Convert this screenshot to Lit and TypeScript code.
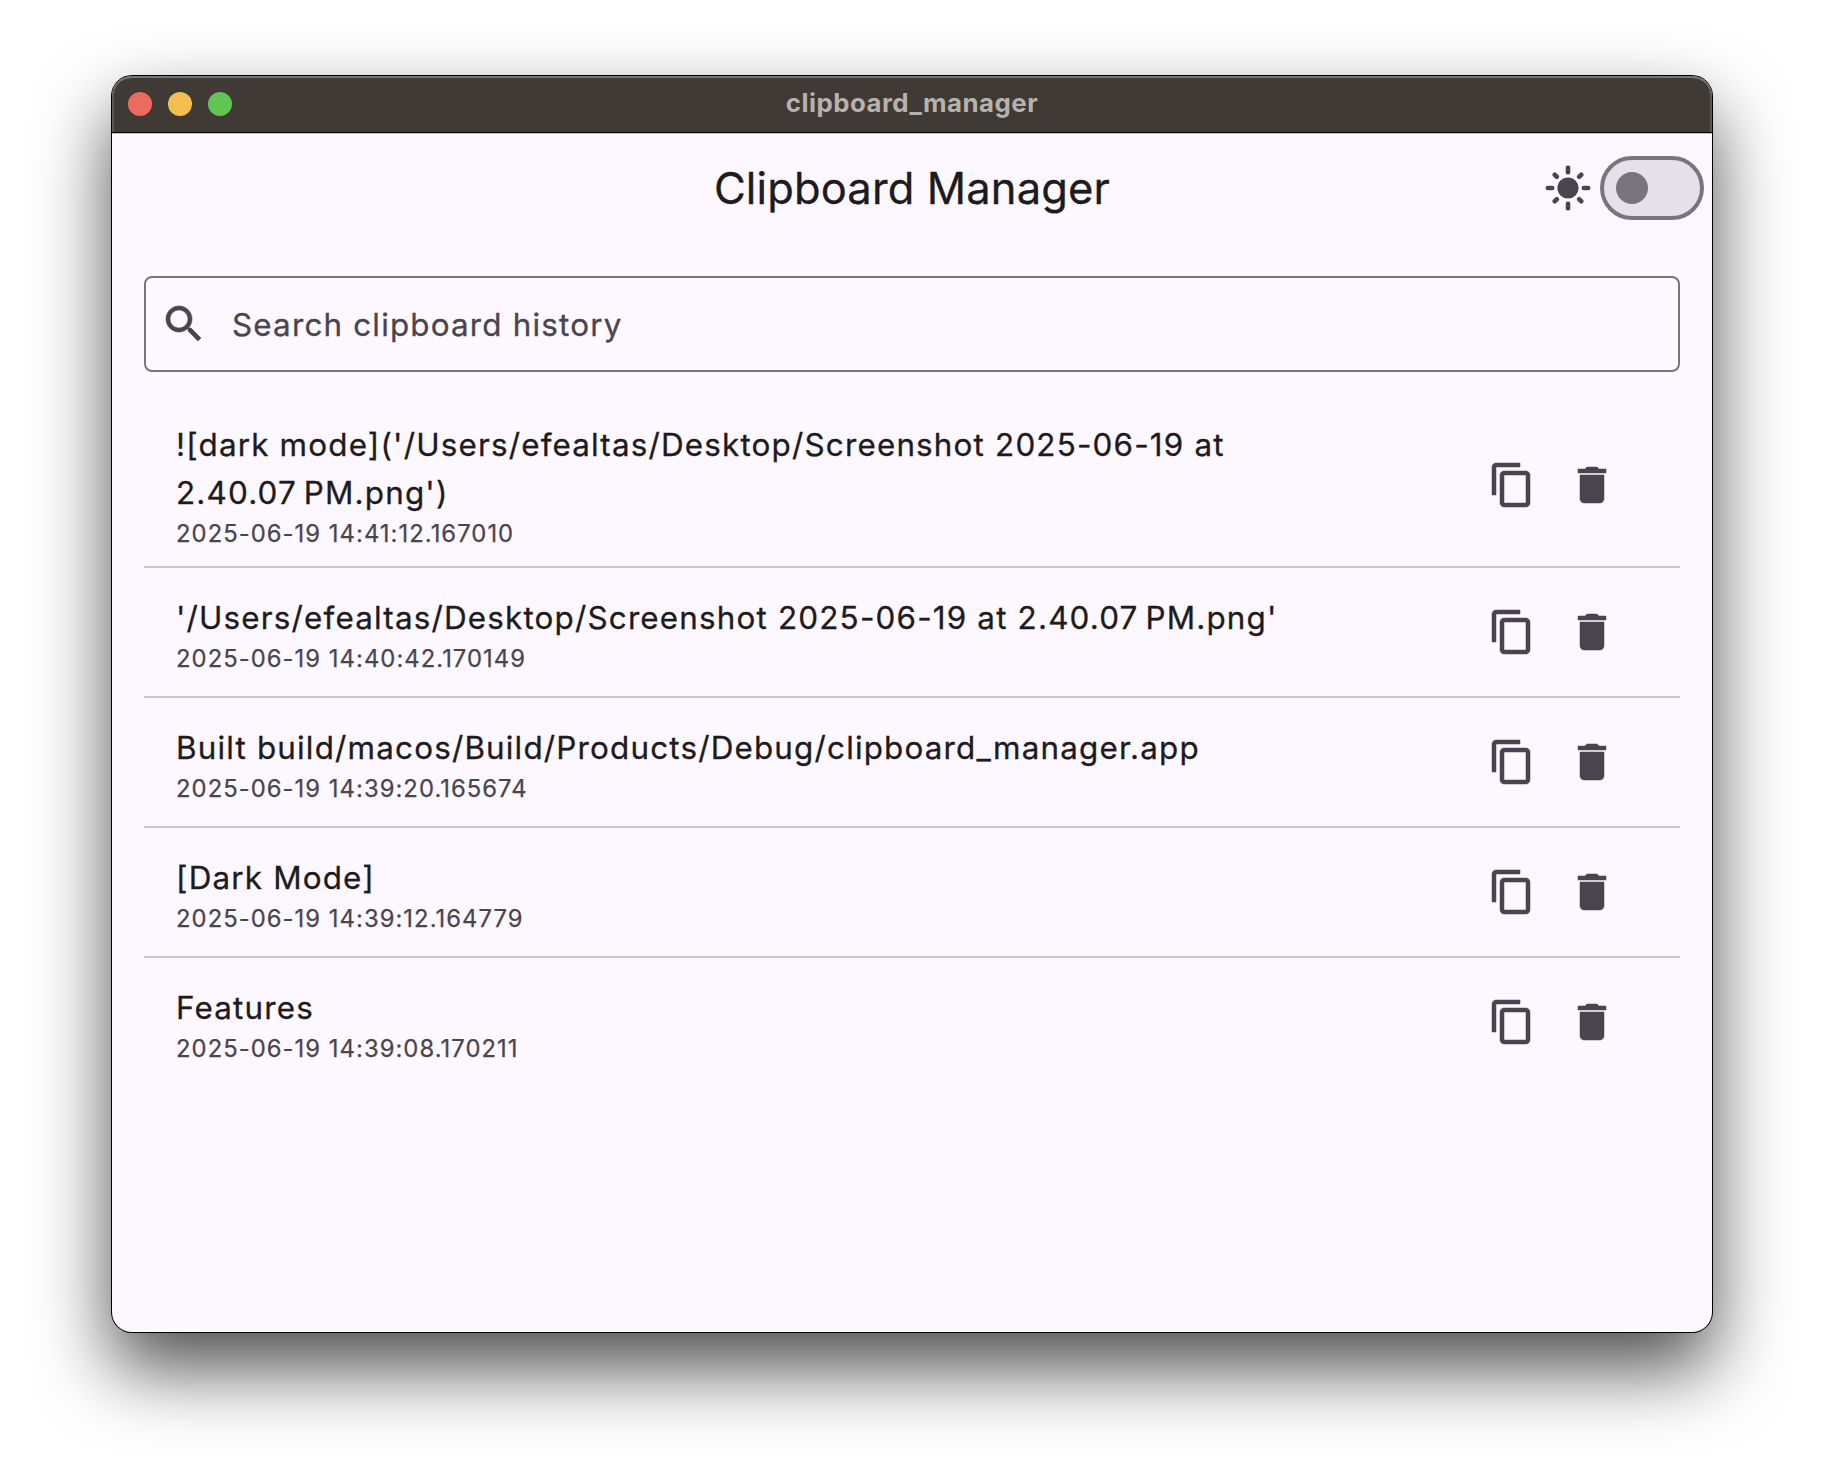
import { LitElement, html, css, svg } from "lit";
import { customElement, state } from "lit/decorators.js";

interface Clip {
  text: string;
  time: string;
  tall?: boolean;
}

const CLIPS: Clip[] = [
  {
    text: "![dark mode]('/Users/efealtas/Desktop/Screenshot 2025-06-19 at 2.40.07\u202FPM.png')",
    time: "2025-06-19 14:41:12.167010",
    tall: true,
  },
  {
    text: "'/Users/efealtas/Desktop/Screenshot 2025-06-19 at 2.40.07\u202FPM.png'",
    time: "2025-06-19 14:40:42.170149",
  },
  {
    text: "Built build/macos/Build/Products/Debug/clipboard_manager.app",
    time: "2025-06-19 14:39:20.165674",
  },
  { text: "[Dark Mode]", time: "2025-06-19 14:39:12.164779" },
  { text: "Features", time: "2025-06-19 14:39:08.170211" },
];

const SEARCH =
  "M15.5 14h-.79l-.28-.27C15.41 12.59 16 11.11 16 9.5 16 5.91 13.09 3 9.5 3S3 5.91 3 9.5 5.91 16 9.5 16c1.61 0 3.09-.59 4.23-1.57l.27.28v.79l5 4.99L20.49 19l-4.99-5zm-6 0C7.01 14 5 11.99 5 9.5S7.01 5 9.5 5 14 7.01 14 9.5 11.99 14 9.5 14z";
const COPY =
  "M16 1H4c-1.1 0-2 .9-2 2v14h2V3h12V1zm3 4H8c-1.1 0-2 .9-2 2v14c0 1.1.9 2 2 2h11c1.1 0 2-.9 2-2V7c0-1.1-.9-2-2-2zm0 16H8V7h11v14z";
const TRASH =
  "M6 19c0 1.1.9 2 2 2h8c1.1 0 2-.9 2-2V7H6v12zM19 4h-3.5l-1-1h-5l-1 1H5v2h14V4z";

const icon = (d: string) =>
  html`<svg class="icon" viewBox="0 0 24 24" width="48" height="48"><path d=${d}></path></svg>`;

@customElement("clip-row")
export class ClipRow extends LitElement {
  static properties = { clip: { attribute: false } };
  declare clip: Clip;

  static styles = css`
    :host {
      display: block;
    }
    .row {
      display: flex;
      align-items: center;
      box-sizing: border-box;
      height: 128px;
      padding: 0 48px 0 32px;
    }
    .row.tall {
      height: 162px;
    }
    .body {
      flex: 1;
      padding-top: 6px;
      min-width: 0;
    }
    .tall .body {
      padding-top: 2px;
    }
    .title {
      font-size: 31.4px;
      line-height: 48px;
      letter-spacing: 1.18px;
      color: #1d1b20;
      -webkit-text-stroke: 0.3px #1d1b20;
      max-width: 1180px;
    }
    .time {
      font-size: 23.8px;
      line-height: 34px;
      letter-spacing: 1.05px;
      color: #49454f;
      -webkit-text-stroke: 0.25px #49454f;
    }
    .actions {
      display: flex;
      margin-bottom: 1px;
    }
    .action {
      width: 80px;
      height: 80px;
      display: flex;
      align-items: center;
      justify-content: center;
      border: 0;
      padding: 0;
      background: none;
    }
    .icon {
      fill: #49454f;
      stroke: #49454f;
      stroke-width: 0.25;
      overflow: visible;
      display: block;
    }
  `;

  render() {
    return html`<div class="row ${this.clip.tall ? "tall" : ""}">
      <div class="body">
        <div class="title">${this.clip.text}</div>
        <div class="time">${this.clip.time}</div>
      </div>
      <div class="actions">
        <button class="action" aria-label="Copy">${icon(COPY)}</button>
        <button class="action" aria-label="Delete">${icon(TRASH)}</button>
      </div>
    </div>`;
  }
}

@customElement("app-root")
export class AppRoot extends LitElement {
  @state() private clips = CLIPS;

  static styles = css`
    :host {
      display: block;
      box-sizing: border-box;
      height: 1480px;
      padding: 76px 112px 148px;
      background: #fff;
      overflow: hidden;
      font-family: Inter, "Liberation Sans", sans-serif;
    }
    .window {
      height: 1256px;
      border-radius: 20px;
      background: #fdf8ff;
      box-shadow:
        0 0 0 1px #000,
        0 36px 76px rgba(0, 0, 0, 0.7);
      display: flex;
      flex-direction: column;
    }
    .titlebar {
      box-sizing: border-box;
      height: 57px;
      border-radius: 20px 20px 0 0;
      background: #3f3a35;
      border-bottom: 1px solid #000;
      box-shadow:
        inset 0 2px 0 #79756f,
        inset 2px 0 0 #5b5752,
        inset -2px 0 0 #5b5752,
        0 1px 0 #c4bfc5;
      display: grid;
      grid-template-columns: 1fr auto 1fr;
      align-items: center;
      padding: 0 16px;
    }
    .lights {
      display: flex;
      gap: 16px;
    }
    .light {
      width: 24px;
      height: 24px;
      border-radius: 50%;
    }
    .close {
      background: #ed6a5f;
    }
    .min {
      background: #f5bf4f;
    }
    .max {
      background: #61c555;
    }
    .name {
      font-size: 25.8px;
      font-weight: 700;
      line-height: 30px;
      letter-spacing: 0.48px;
      color: #b8b2ac;
      padding-bottom: 2px;
    }
    .appbar {
      height: 109px;
      display: grid;
      grid-template-columns: 1fr auto 1fr;
      align-items: center;
      padding: 0 8px;
    }
    .heading {
      grid-column: 2;
      font-size: 43.5px;
      line-height: 56px;
      letter-spacing: 0.13px;
      color: #1d1b20;
      -webkit-text-stroke: 0.3px #1d1b20;
    }
    .theme {
      display: flex;
      justify-content: flex-end;
      align-items: center;
      gap: 8px;
    }
    .icon {
      fill: #49454f;
      display: block;
    }
    .switch {
      box-sizing: border-box;
      width: 104px;
      height: 64px;
      border: 4px solid #79747e;
      border-radius: 32px;
      background: #e6e0e9;
      display: flex;
      align-items: center;
      padding-left: 12px;
    }
    .thumb {
      width: 32px;
      height: 32px;
      border-radius: 50%;
      background: #79747e;
    }
    .search {
      margin: 34px 32px 0;
      box-sizing: border-box;
      height: 96px;
      border: 2px solid #79747e;
      border-radius: 8px;
      display: flex;
      align-items: center;
      padding-left: 14px;
      gap: 24px;
    }
    .search .icon {
      stroke: #49454f;
      stroke-width: 0.3;
    }
    .hint {
      font-size: 31.4px;
      line-height: 48px;
      letter-spacing: 1.18px;
      color: #49454f;
      -webkit-text-stroke: 0.3px #49454f;
      padding-top: 2px;
    }
    .list {
      margin: 32px 32px 0;
    }
    .divider {
      height: 2px;
      background: #cac4d0;
    }
  `;

  render() {
    const rays = [0, 45, 90, 135, 180, 225, 270, 315];
    return html`<div class="window">
      <div class="titlebar">
        <div class="lights">
          <span class="light close"></span>
          <span class="light min"></span>
          <span class="light max"></span>
        </div>
        <div class="name">clipboard_manager</div>
      </div>
      <div class="appbar">
        <div class="heading">Clipboard Manager</div>
        <div class="theme">
          <svg class="icon" viewBox="-24 -24 48 48" width="48" height="48">
            <circle r="10.6"></circle>
            ${rays.map(
              (a) => svg`<rect x="-2.3" y=${a % 90 ? -21 : -22.4} width="4.6" height=${a % 90 ? 7.4 : 8.8} rx="2" transform="rotate(${a})"></rect>`,
            )}
          </svg>
          <div class="switch"><span class="thumb"></span></div>
        </div>
      </div>
      <div class="search">${icon(SEARCH)}<span class="hint">Search clipboard history</span></div>
      <div class="list">
        ${this.clips.map(
          (c, i) => html`${i ? html`<div class="divider"></div>` : ""}<clip-row .clip=${c}></clip-row>`,
        )}
      </div>
    </div>`;
  }
}
